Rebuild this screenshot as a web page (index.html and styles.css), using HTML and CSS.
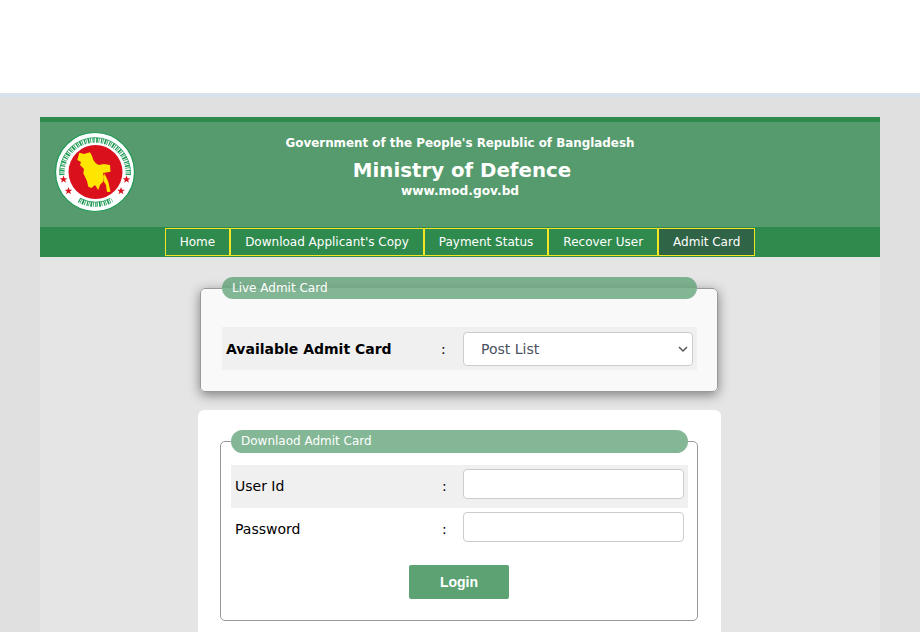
FILE: index.html
```html
<!DOCTYPE html>
<html lang="en">
  <head>
    <meta charset="utf-8" />
    <title>Ministry of Defence</title>
    <link rel="stylesheet" href="styles.css">
  </head>
  <body>
    <div class="top-blank"></div>
    <div class="page">
      <div class="container">
        <header class="banner">
          <svg class="emblem" viewBox="0 0 82 82" width="82" height="82">
            <circle cx="41" cy="41" r="39.5" fill="#fff" stroke="#1f9a55" stroke-width="1.2" />
            <circle cx="41.5" cy="41" r="27" fill="#da101c" />
            <path class="ring-text" d="M8.1 44 A33 33 0 1 1 74 44" />
            <path class="ring-line" d="M5.6 44 A35.5 35.5 0 1 1 76.5 44" />
            <path class="ring-text" d="M25 69 A33 33 0 0 0 58 69" />
            <path class="ring-line" d="M27 67.5 A30 30 0 0 0 56 67.5" />
            <path d="M25.3 21.7 L30 23 L36 21.3 L38 25 L39.3 29 L42 32.5 L45 34 L50 33 L56 34 L56.5 40.7 L49 42 L50 46 L49 50.7 L46 54 L44.3 59 L41 54 L37.5 57 L34.3 55.7 L33 50 L29.3 42.3 L30 38 L26 34 L27 31 L23.3 29 Z" fill="#ffe600" />
            <path d="M50.5 42.3 L54.3 50.7 L56.5 60.7 L53 61 L52 54 L49.5 50 Z" fill="#ffe600" />
            <path class="star" d="M0 -4 L1 -1.3 L3.8 -1.2 L1.6 .5 L2.4 3.2 L0 1.6 L-2.4 3.2 L-1.6 .5 L-3.8 -1.2 L-1 -1.3 Z" transform="translate(9.5 48.5)" />
            <path class="star" d="M0 -4 L1 -1.3 L3.8 -1.2 L1.6 .5 L2.4 3.2 L0 1.6 L-2.4 3.2 L-1.6 .5 L-3.8 -1.2 L-1 -1.3 Z" transform="translate(14.5 60)" />
            <path class="star" d="M0 -4 L1 -1.3 L3.8 -1.2 L1.6 .5 L2.4 3.2 L0 1.6 L-2.4 3.2 L-1.6 .5 L-3.8 -1.2 L-1 -1.3 Z" transform="translate(72.5 48.5)" />
            <path class="star" d="M0 -4 L1 -1.3 L3.8 -1.2 L1.6 .5 L2.4 3.2 L0 1.6 L-2.4 3.2 L-1.6 .5 L-3.8 -1.2 L-1 -1.3 Z" transform="translate(67 60)" />
          </svg>
          <div class="banner-text">
            <p class="gov">Government of the People's Republic of Bangladesh</p>
            <h1>Ministry of Defence</h1>
            <p class="site">www.mod.gov.bd</p>
          </div>
        </header>

        <nav class="menu">
          <a href="#">Home</a>
          <a href="#">Download Applicant's Copy</a>
          <a href="#">Payment Status</a>
          <a href="#">Recover User</a>
          <a href="#" class="active">Admit Card</a>
        </nav>

        <main class="content">
          <fieldset class="box box-live">
            <legend>Live Admit Card</legend>
            <div class="row shaded">
              <label class="row-label strong">Available Admit Card</label>
              <span class="colon">:</span>
              <select class="field">
                <option>Post List</option>
              </select>
            </div>
          </fieldset>

          <div class="card">
            <fieldset class="box box-login">
              <legend>Downlaod Admit Card</legend>
              <div class="row shaded">
                <label class="row-label">User Id</label>
                <span class="colon">:</span>
                <input class="field" type="text">
              </div>
              <div class="row">
                <label class="row-label">Password</label>
                <span class="colon">:</span>
                <input class="field" type="password">
              </div>
              <div class="actions">
                <button type="button" class="login">Login</button>
              </div>
            </fieldset>
          </div>
        </main>
      </div>
    </div>
  </body>
</html>
```

FILE: styles.css
```css
html {
  font-family: "DejaVu Sans", Verdana, sans-serif;
  font-size: 14px;
}

body {
  margin: 0;
  background-color: #fff;
}

.top-blank {
  height: 93px;
  background-color: #fff;
}

.page {
  box-sizing: border-box;
  height: 539px;
  padding: 20px 40px 0;
  border-top: 4px solid #d8e2ec;
  background-color: #e0e0e0;
}

.container {
  height: 100%;
  background-color: #e5e5e5;
}

.banner {
  position: relative;
  box-sizing: border-box;
  height: 110px;
  border-top: 5px solid #2f8a4e;
  background-color: #569b6d;
  color: #fff;
  text-align: center;
}

.emblem {
  position: absolute;
  top: 9px;
  left: 14px;
}

.ring-text {
  fill: none;
  stroke: #1f9a55;
  stroke-width: 5;
  stroke-dasharray: 1.2 .7 .7 1.1 1.7 .8 .8 1.5;
}

.ring-line {
  fill: none;
  stroke: #1f9a55;
  stroke-width: .8;
}

.star {
  fill: #da101c;
}

.banner-text p,
.banner-text h1 {
  margin: 0;
}

.banner-text {
  padding-top: 14px;
  font-weight: bold;
}

.gov {
  font-size: 11.9px;
  line-height: 15px;
}

.banner-text h1 {
  margin-top: 7px;
  padding-left: 4px;
  font-size: 19.8px;
  line-height: 26px;
}

.site {
  font-size: 12.2px;
  line-height: 14px;
}

.menu {
  display: flex;
  justify-content: center;
  height: 30px;
  background-color: #2f8a4e;
}

.menu a {
  box-sizing: border-box;
  height: 28px;
  margin: 1px 0;
  padding: 0 14px;
  border: 1px solid #f5e625;
  color: #fff;
  font-size: 12px;
  line-height: 26px;
  text-decoration: none;
}

.menu a.active {
  background-color: #2f6446;
}

.content {
  padding-top: 20px;
}

.box {
  min-width: 0;
  margin: 0;
  border: 1px solid #999;
  border-radius: 5px;
  background-color: #fff;
}

.box legend {
  box-sizing: border-box;
  padding: 0 10px;
  border-radius: 12px;
  background-color: rgba(85, 155, 110, .72);
  color: #fff;
  font-size: 12px;
}

.box-live {
  box-sizing: border-box;
  width: 518px;
  height: 115px;
  margin-left: 160px;
  padding: 0 20px 0 21px;
  background-color: #f9f9f9;
  box-shadow: 0 3px 12px rgba(0, 0, 0, .45);
}

.box-live legend {
  width: 475px;
  height: 22px;
  margin-bottom: 1px;
  line-height: 22px;
}

.box-live .row {
  margin-top: 27px;
}

.box-live .row-label {
  width: 215px;
}

.box-live .colon {
  width: 22px;
}

.card {
  box-sizing: border-box;
  width: 523px;
  height: 222px;
  margin: 18px 0 0 158px;
  padding: 20px 22px 0;
  border-radius: 6px 6px 0 0;
  background-color: #fff;
}

.box-login {
  box-sizing: border-box;
  width: 478px;
  height: 191px;
  padding: 0 9px 0 10px;
}

.box-login legend {
  width: 457px;
  height: 23px;
  line-height: 23px;
}

.box-login .row:first-of-type {
  margin-top: 12px;
}

.box-login .field {
  align-self: flex-start;
  margin-top: 4px;
}

.box-login .row-label,
.box-login .colon {
  padding-bottom: 2px;
}

.row {
  display: flex;
  align-items: center;
  height: 43px;
  padding: 0 4px;
}

.shaded {
  background-color: #f0f0f0;
}

.row-label {
  width: 207px;
  color: #000;
  font-size: 14px;
}

.strong {
  font-weight: bold;
}

.colon {
  width: 21px;
  color: #000;
  font-size: 14px;
}

.field {
  box-sizing: border-box;
  flex: none;
  width: 221px;
  height: 30px;
  border: 1px solid #ccc;
  border-radius: 4px;
  background-color: #fff;
  font: inherit;
}

select.field {
  width: 230px;
  height: 34px;
  padding-left: 17px;
  background-image: url("data:image/svg+xml,%3Csvg xmlns='http://www.w3.org/2000/svg' width='10' height='8'%3E%3Cpath d='M1 2l4 4 4-4' fill='none' stroke='%23555' stroke-width='1.5'/%3E%3C/svg%3E");
  background-position: right 4px center;
  background-repeat: no-repeat;
  color: #495060;
  appearance: none;
}

.actions {
  display: flex;
  justify-content: center;
  margin-top: 14px;
  padding-right: 1px;
}

.login {
  width: 100px;
  height: 34px;
  border: none;
  border-radius: 2px;
  background-color: #5ca273;
  color: #fff;
  font: bold 14px "Liberation Sans", Arial, sans-serif;
}
```
